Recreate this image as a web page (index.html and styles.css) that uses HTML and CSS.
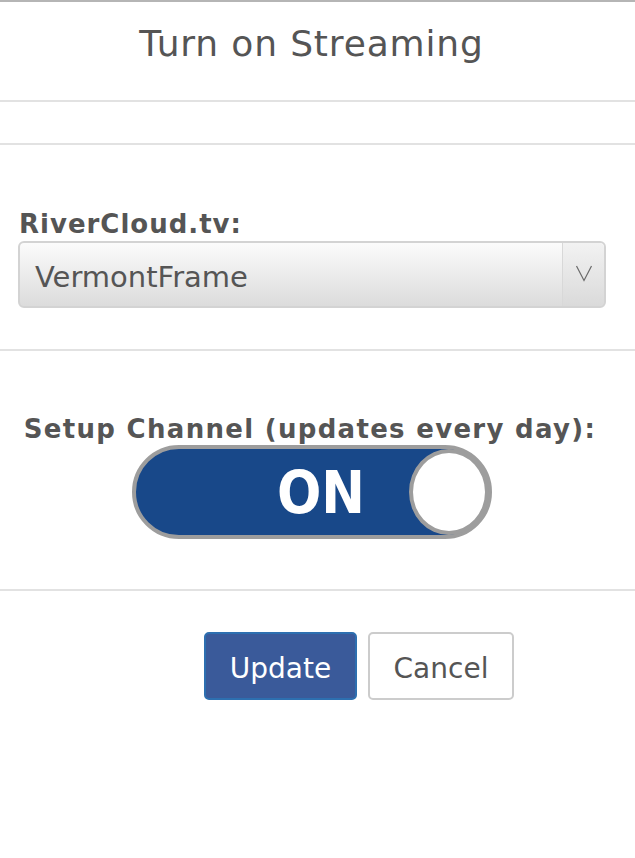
FILE: index.html
```html
<!DOCTYPE html>
<html>
<head>
<meta charset="utf-8">
<link rel="stylesheet" href="styles.css">
</head>
<body>
<div class="page">
  <header class="title-bar">
    <h1 class="title">Turn on Streaming</h1>
  </header>
  <div class="spacer-row"></div>
  <section class="section source">
    <label class="label">RiverCloud.tv:</label>
    <div class="select">
      <span class="select-value">VermontFrame</span>
      <span class="select-arrow">
        <svg width="18" height="18" viewBox="0 0 18 18"><path d="M1.5 2 L9 16.5 L16.5 2" fill="none" stroke="#6a6a6a" stroke-width="1.2"/></svg>
      </span>
    </div>
  </section>
  <section class="section channel">
    <div class="label center">Setup Channel (updates every day):</div>
    <div class="toggle">
      <span class="toggle-text">ON</span>
      <span class="knob"></span>
    </div>
  </section>
  <section class="actions">
    <button class="btn primary">Update</button>
    <button class="btn secondary">Cancel</button>
  </section>
</div>
</body>
</html>
```
FILE: styles.css
```css
html, body {
  margin: 0;
  padding: 0;
  background: #fff;
}
body {
  font-family: "DejaVu Sans", Verdana, sans-serif;
  color: #555;
}
.page {
  width: 635px;
  border-top: 2px solid #b5b5b5;
}
.title-bar {
  height: 98px;
  border-bottom: 2px solid #e2e2e2;
  display: flex;
  justify-content: center;
}
.title {
  margin: 19px 12px 0 0;
  font-size: 36px;
  font-weight: normal;
  color: #555;
  letter-spacing: 0.85px;
  line-height: 46px;
}
.spacer-row {
  height: 41px;
  border-bottom: 2px solid #e2e2e2;
}
.section {
  border-bottom: 2px solid #e2e2e2;
}
.source {
  padding: 63px 29px 40px 18px;
  box-sizing: border-box;
  height: 206px;
}
.label {
  display: block;
  font-size: 26px;
  font-weight: bold;
  color: #555;
  letter-spacing: 1px;
  padding-left: 1px;
  margin-bottom: 1px;
  line-height: 32px;
}
.label.center {
  text-align: center;
  padding-left: 0;
  padding-right: 15px;
  letter-spacing: 1.3px;
}
.select {
  height: 67px;
  box-sizing: border-box;
  border: 2px solid #d3d3d3;
  border-radius: 6px;
  background: linear-gradient(#fbfbfb, #dcdcdc);
  display: flex;
  align-items: stretch;
}
.select-value {
  flex: 1;
  font-size: 29px;
  color: #555;
  padding-left: 15px;
  padding-top: 4px;
  display: flex;
  align-items: center;
}
.select-arrow {
  width: 41px;
  border-left: 1px solid #d8d8d8;
  display: flex;
  align-items: center;
  justify-content: center;
  padding-bottom: 4px;
  background: linear-gradient(#f2f2f2, #dadada);
  border-radius: 0 5px 5px 0;
}
.channel {
  height: 240px;
  box-sizing: border-box;
  padding-top: 62px;
  display: flex;
  flex-direction: column;
  align-items: center;
}
.toggle {
  margin-top: -1px;
  margin-right: 11px;
  width: 360px;
  height: 94px;
  box-sizing: border-box;
  border: 4px solid #9d9d9d;
  border-radius: 47px;
  background: #184889;
  display: flex;
  align-items: center;
  position: relative;
}
.toggle-text {
  color: #fff;
  font-family: "DejaVu Sans Condensed", "DejaVu Sans", sans-serif;
  font-stretch: condensed;
  font-weight: bold;
  font-size: 58px;
  line-height: 58px;
  margin-left: 141px;
  margin-top: 2px;
}
.knob {
  position: absolute;
  right: -1px;
  top: 0;
  width: 80px;
  height: 86px;
  box-sizing: border-box;
  border: 4px solid #9d9d9d;
  border-radius: 50%;
  background: #fff;
}
.actions {
  display: flex;
  justify-content: center;
  gap: 11px;
  padding-top: 41px;
  padding-left: 83px;
}
.btn {
  height: 68px;
  font-family: "DejaVu Sans", Verdana, sans-serif;
  font-size: 28px;
  border-radius: 5px;
  padding: 4px 0 0;
}
.btn.primary {
  background: #3a5a9a;
  border: 2px solid #2d6fb0;
  color: #fff;
  width: 153px;
}
.btn.secondary {
  background: #fff;
  border: 2px solid #ccc;
  color: #555;
  width: 146px;
}
```
